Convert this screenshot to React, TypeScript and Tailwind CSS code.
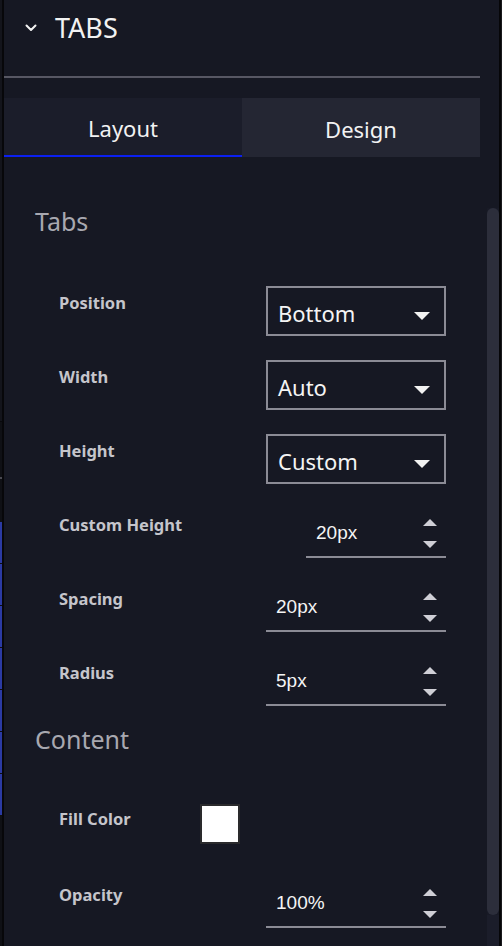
import React from "react";

const FONT = { fontFamily: "'Noto Sans', 'Open Sans', sans-serif" };

type Row =
  | { kind: "select"; label: string; value: string }
  | { kind: "number"; label: string; value: string; narrow?: boolean }
  | { kind: "color"; label: string };

const tabRows: Row[] = [
  { kind: "select", label: "Position", value: "Bottom" },
  { kind: "select", label: "Width", value: "Auto" },
  { kind: "select", label: "Height", value: "Custom" },
  { kind: "number", label: "Custom Height", value: "20px", narrow: true },
  { kind: "number", label: "Spacing", value: "20px" },
  { kind: "number", label: "Radius", value: "5px" },
];

function Caret() {
  return (
    <svg width="16" height="8" viewBox="0 0 16 8" className="mt-[24px] shrink-0">
      <path d="M0 0 H16 L8 8 Z" fill="#f2f2f2" />
    </svg>
  );
}

function Spinner() {
  return (
    <div className="flex flex-col items-center pt-[11px] mr-[9px] gap-[15px]">
      <svg width="14" height="7" viewBox="0 0 14 7">
        <path d="M0 7 L7 0 L14 7 Z" fill="#cfcfd6" />
      </svg>
      <svg width="14" height="7" viewBox="0 0 14 7">
        <path d="M0 0 H14 L7 7 Z" fill="#cfcfd6" />
      </svg>
    </div>
  );
}

function Label({ text }: { text: string }) {
  return (
    <div className="mt-[7px] text-[16.5px] leading-[20px] font-bold text-[#c5c5cb]" style={FONT}>
      {text}
    </div>
  );
}

function Field({ row }: { row: Row }) {
  if (row.kind === "select") {
    return (
      <div className="w-[180px] h-[50px] border-2 border-[#8b8b95] flex items-start justify-between pl-[10px] pr-[14px]">
        <span className="text-[22px] leading-[30px] mt-[10px] text-[#f4f4f4]" style={FONT}>
          {row.value}
        </span>
        <Caret />
      </div>
    );
  }
  if (row.kind === "number") {
    return (
      <div className={`${row.narrow ? "w-[140px]" : "w-[180px]"} h-[50px] border-b-2 border-[#8b8b95] flex justify-between pl-[10px]`}>
        <span
          className="text-[19px] leading-[24px] mt-[13px] text-[#f4f4f4]"
          style={{ fontFamily: "'Liberation Sans', Arial, sans-serif" }}
        >
          {row.value}
        </span>
        <Spinner />
      </div>
    );
  }
  return null;
}

function SettingRow({ row }: { row: Row }) {
  return (
    <div className="flex items-start justify-between h-[50px] pl-[55px] pr-[37px]">
      <Label text={row.label} />
      <Field row={row} />
    </div>
  );
}

function LeftStrip() {
  const blues = [0, 1, 2, 3, 4, 5, 6];
  return (
    <div className="w-[4px] h-full flex shrink-0">
      <div className="w-[2px] flex flex-col">
        <div className="h-[421px] bg-[#13141b]" />
        <div className="h-[1px] bg-[#08080b]" />
        <div className="h-[55px] bg-[#0f1015]" />
        <div className="h-[2px] bg-[#4a4a52]" />
        <div className="h-[43px] bg-[#0f1015]" />
        {blues.map((b) => (
          <div key={b} className="h-[42px] bg-[#2b3aa3] border-b border-[#0c0d12]" />
        ))}
        <div className="flex-1 bg-[#0f1015]" />
      </div>
      <div className="w-[2px] bg-[#07070a]" />
    </div>
  );
}

export default function App() {
  return (
    <div className="w-[502px] h-[946px] flex bg-[#161823] overflow-hidden" style={FONT}>
      <LeftStrip />

      <div className="flex-1 flex flex-col min-w-0">
        {/* Section header */}
        <div className="h-[76px] flex items-start pt-[12px] pl-[21px]">
          <div className="h-[32px] flex items-center">
            <svg width="12" height="8" viewBox="0 0 12 8" fill="none">
              <path d="M1.5 1.5 L6 6 L10.5 1.5" stroke="#f2f2f2" strokeWidth="2" strokeLinecap="round" strokeLinejoin="round" />
            </svg>
          </div>
          <span className="ml-[18px] text-[27px] leading-[32px] text-[#f2f2f2]">TABS</span>
        </div>
        <div className="h-[2px] bg-[#575763] mr-[19px]" />

        {/* Tab strip */}
        <div className="mt-[20px] h-[59px] mr-[19px] flex">
          <div className="flex-1 bg-[#1b1d2a] flex flex-col">
            <div className="flex-1 flex items-center justify-center pt-[4px] text-[22px] text-[#f2f2f2]">Layout</div>
            <div className="h-[2px] bg-[#0b20f0]" />
          </div>
          <div className="flex-1 bg-[#242633] flex items-center justify-center pt-[4px] text-[22px] text-[#f2f2f2]">
            Design
          </div>
        </div>

        {/* Scroll area */}
        <div className="flex-1 flex min-h-0">
          <div className="flex-1 flex flex-col">
            <div className="mt-[48px] pl-[31px] text-[25px] leading-[32px] text-[#a8a8b0]">Tabs</div>
            <div className="mt-[49px] flex flex-col gap-[24px]">
              {tabRows.map((r) => (
                <SettingRow key={r.label} row={r} />
              ))}
            </div>

            <div className="mt-[17px] pl-[31px] text-[25px] leading-[32px] text-[#a8a8b0]">Content</div>

            <div className="mt-[47px] flex items-start h-[50px] pl-[55px]">
              <div className="w-[141px]">
                <Label text="Fill Color" />
              </div>
              <div className="mt-[2px] w-[40px] h-[40px] border-2 border-[#2a2a2c] bg-white" />
            </div>

            <div className="mt-[26px]">
              <SettingRow row={{ kind: "number", label: "Opacity", value: "100%" }} />
            </div>
          </div>

          {/* Scrollbar */}
          <div className="w-[12px] ml-[4px] flex flex-col bg-[#181a26]">
            <div className="h-[51px] bg-[#161823]" />
            <div className="h-[707px] rounded-full bg-[#2c2e3b]" />
            <div className="flex-1 bg-[#1b1d2a]" />
          </div>
        </div>
      </div>

      <div className="w-[3px] flex">
        <div className="w-[2px] bg-[#060608]" />
        <div className="w-[1px] bg-[#1a1a1d]" />
      </div>
    </div>
  );
}
